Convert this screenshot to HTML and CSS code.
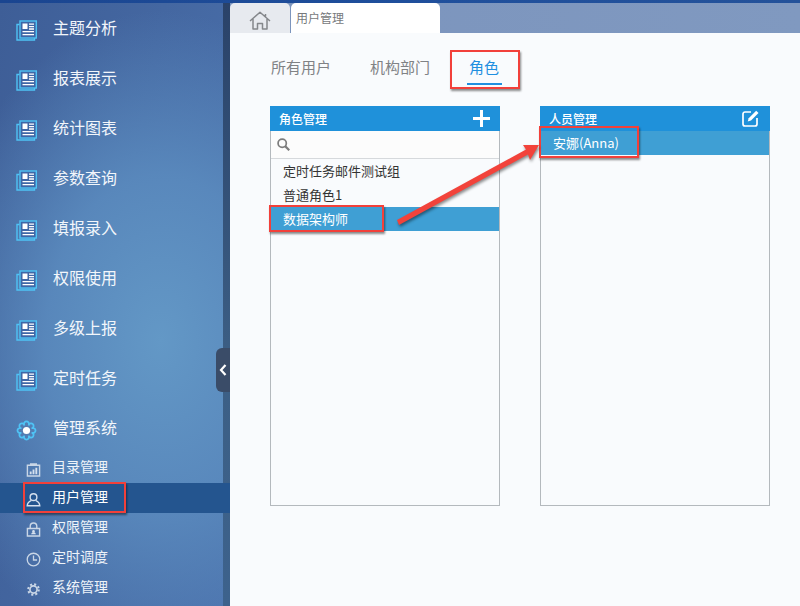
FILE: index.html
```html
<!DOCTYPE html>
<html lang="zh-CN">
<head>
<meta charset="utf-8">
<title>用户管理</title>
<link rel="stylesheet" href="styles.css">
</head>
<body>
<svg class="defs" width="0" height="0" aria-hidden="true">
  <symbol id="i-news" viewBox="0 0 21 21">
    <path d="M3.500 4.500H1V20H18.500V18" fill="none" stroke="#4fc3f5" stroke-width="1.400"/>
    <rect x="4" y="1" width="16.300" height="17" fill="#3f67a6" stroke="#4fc3f5" stroke-width="1.400"/>
    <path d="M6.500 3.500H11.500V9H6.500Z" fill="#fff"/>
    <path d="M13 4.200H18M13 6.600H18M13 9H18M6.500 11.600H18M6.500 14.600H18" stroke="#fff" stroke-width="1.300"/>
  </symbol>
</svg>
<div class="page">
  <div class="topbar"></div>
  <div class="shell">
    <aside class="sidebar">
      <nav class="menu">
        <a class="menu-item"><svg class="menu-icon"><use href="#i-news"/></svg><span>主题分析</span></a>
        <a class="menu-item"><svg class="menu-icon"><use href="#i-news"/></svg><span>报表展示</span></a>
        <a class="menu-item"><svg class="menu-icon"><use href="#i-news"/></svg><span>统计图表</span></a>
        <a class="menu-item"><svg class="menu-icon"><use href="#i-news"/></svg><span>参数查询</span></a>
        <a class="menu-item"><svg class="menu-icon"><use href="#i-news"/></svg><span>填报录入</span></a>
        <a class="menu-item"><svg class="menu-icon"><use href="#i-news"/></svg><span>权限使用</span></a>
        <a class="menu-item"><svg class="menu-icon"><use href="#i-news"/></svg><span>多级上报</span></a>
        <a class="menu-item"><svg class="menu-icon"><use href="#i-news"/></svg><span>定时任务</span></a>
        <a class="menu-item">
          <svg class="menu-icon" viewBox="0 0 21 21">
            <path d="M16.230 8.130A2.500 2.500 0 1 1 16.230 12.870A2.500 2.500 0 1 1 12.870 16.230A2.500 2.500 0 1 1 8.130 16.230A2.500 2.500 0 1 1 4.770 12.870A2.500 2.500 0 1 1 4.770 8.130A2.500 2.500 0 1 1 8.130 4.770A2.500 2.500 0 1 1 12.870 4.770A2.500 2.500 0 1 1 16.230 8.130Z" fill="none" stroke="#4fc3f5" stroke-width="1.800" stroke-linejoin="round"/>
            <circle cx="10.500" cy="10.500" r="3.600" fill="#fff"/>
          </svg>
          <span>管理系统</span>
        </a>
      </nav>
      <ul class="submenu">
        <li class="sub-item">
          <svg class="sub-icon" viewBox="0 0 16 16"><path d="M1.500 3.500h13v11.500h-13zM5 3.500V2h6v1.500" fill="none" stroke="#c9d6e6" stroke-width="1.500"/><path d="M4 13V10h2v3zM7 13V8h2v5zM10 13V6h2v7z" fill="#d5e0ee"/></svg>
          <span>目录管理</span>
        </li>
        <li class="sub-item sub-item-active">
          <svg class="sub-icon" viewBox="0 0 16 16"><circle cx="8" cy="5.500" r="3.600" fill="none" stroke="#d5e0ee" stroke-width="1.500"/><path d="M5.500 9.300C3 10.300 1.500 12 1.300 14.600h13.400C14.500 12 13 10.300 10.500 9.300" fill="none" stroke="#d5e0ee" stroke-width="1.500"/></svg>
          <span>用户管理</span>
        </li>
        <li class="sub-item">
          <svg class="sub-icon" viewBox="0 0 16 16"><path d="M1.500 7h13v8h-13zM4.500 7V4.500a3.500 3.500 0 0 1 7 0V7" fill="none" stroke="#c9d6e6" stroke-width="1.500"/><circle cx="8" cy="10" r="1.400" fill="#d5e0ee"/><path d="M5.500 13c.3-1.500 1.300-2 2.500-2s2.200.5 2.500 2z" fill="#d5e0ee"/></svg>
          <span>权限管理</span>
        </li>
        <li class="sub-item">
          <svg class="sub-icon" viewBox="0 0 16 16"><circle cx="8" cy="8" r="6.700" fill="none" stroke="#c9d6e6" stroke-width="1.400"/><path d="M8 3.800V8.500H11.800" fill="none" stroke="#c9d6e6" stroke-width="1.400"/></svg>
          <span>定时调度</span>
        </li>
        <li class="sub-item">
          <svg class="sub-icon" viewBox="0 0 16 16"><circle cx="8" cy="8" r="3.800" fill="none" stroke="#c9d6e6" stroke-width="1.800"/><circle cx="8" cy="8" r="5.600" fill="none" stroke="#c9d6e6" stroke-width="2.200" stroke-dasharray="2.200 2.198"/></svg>
          <span>系统管理</span>
        </li>
      </ul>
    </aside>
    <div class="strip"></div>
    <main class="main">
      <div class="tabbar">
        <div class="tab tab-home">
          <svg class="home-icon" viewBox="0 0 22 19"><path d="M1 10 11 1.200 21 10M4 8V18H8.500V12.500H13.500V18H18V8M16.500 3V5.500" fill="none" stroke="#85888c" stroke-width="1.500" stroke-linejoin="round"/></svg>
        </div>
        <div class="tab tab-current">用户管理</div>
      </div>
      <section class="content">
        <div class="subtabs">
          <span class="subtab">所有用户</span>
          <span class="subtab">机构部门</span>
          <span class="subtab subtab-active">角色</span>
        </div>
        <div class="panels">
          <div class="panel">
            <div class="panel-head">
              <span>角色管理</span>
              <svg class="panel-add" viewBox="0 0 17 17"><path d="M8.500 0V17M0 8.500H17" stroke="#fff" stroke-width="3"/></svg>
            </div>
            <div class="search">
              <svg class="search-icon" viewBox="0 0 12 12"><circle cx="4.800" cy="4.800" r="3.800" fill="none" stroke="#7d7d7d" stroke-width="1.600"/><path d="M7.500 7.500 11.300 11.300" stroke="#7d7d7d" stroke-width="2"/></svg>
            </div>
            <ul class="rows">
              <li class="row">定时任务邮件测试组</li>
              <li class="row">普通角色1</li>
              <li class="row row-active">数据架构师</li>
            </ul>
          </div>
          <div class="panel">
            <div class="panel-head">
              <span>人员管理</span>
              <svg class="panel-edit" viewBox="0 0 17 17"><path d="M9 2H3a2 2 0 0 0-2 2v10a2 2 0 0 0 2 2h10a2 2 0 0 0 2-2V8" fill="none" stroke="#fff" stroke-width="1.700"/><path d="M14.200.7 16.500 3 9 10.500l-3.300 1 1-3.300z" fill="#fff"/></svg>
            </div>
            <ul class="rows">
              <li class="row row-active">安娜(Anna)</li>
            </ul>
          </div>
        </div>
      </section>
    </main>
  </div>

  <button class="collapse" type="button" aria-label="收起">
    <svg viewBox="0 0 8 12" width="8" height="12"><path d="M6.500 1 2 6l4.500 5" fill="none" stroke="#fff" stroke-width="2.200"/></svg>
  </button>

  <div class="mark mark-user"></div>
  <div class="mark mark-role-tab"></div>
  <div class="mark mark-role-row"></div>
  <div class="mark mark-person"></div>
  <svg class="arrow" viewBox="0 0 800 606" aria-hidden="true">
    <polygon points="397,220 526,149.500 523,145 539,145 530,160 528,154.500 399,225" fill="#f2433b"/>
  </svg>
</div>
</body>
</html>
```
FILE: styles.css
```css
* {
  box-sizing: border-box;
}

html,
body {
  margin: 0;
  height: 100%;
}

body {
  font-family: "Noto Sans CJK SC", "Noto Sans", sans-serif;
  overflow: hidden;
}

.defs {
  position: absolute;
}

.page {
  position: relative;
  width: 800px;
  height: 606px;
  display: flex;
  flex-direction: column;
  overflow: hidden;
}

.topbar {
  height: 3px;
  flex: none;
  background: linear-gradient(90deg, #1a4590, #1f4f9c 50%, #24529a);
}

.shell {
  flex: 1;
  display: flex;
  min-height: 0;
}

.sidebar {
  width: 223px;
  flex: none;
  background:
    radial-gradient(ellipse 230px 330px at 72% 56%, #6398c6 0%, rgba(92, 141, 192, .85) 50%, rgba(70, 105, 165, 0) 100%),
    linear-gradient(100deg, #3e5e97, #4a70ab);
}

.strip {
  width: 7px;
  flex: none;
  background: linear-gradient(180deg, #2a4269, #3c5f85 60%, #3d628c);
}

.menu-item {
  height: 50px;
  display: flex;
  align-items: flex-start;
  padding: 13px 0 0 16px;
  color: #f2f6fb;
  font-size: 16px;
  line-height: 22px;
}

.menu-icon {
  width: 21px;
  height: 21px;
  flex: none;
  margin: 4px 16px 0 0;
}

.submenu {
  margin: 0;
  padding: 0;
  list-style: none;
}

.sub-item {
  height: 30px;
  display: flex;
  align-items: center;
  padding: 0 0 4px 26px;
  color: #eef3f9;
  font-size: 14px;
  line-height: 20px;
}

.sub-item-active {
  width: 230px;
  color: #fff;
  background: #24558f;
  position: relative;
}

.sub-icon {
  width: 15px;
  height: 15px;
  flex: none;
  margin: 7px 11px 0 0;
}

.main {
  flex: 1;
  min-width: 0;
  display: flex;
  flex-direction: column;
  background: #f9fbfd;
}

.tabbar {
  height: 30px;
  flex: none;
  display: flex;
  gap: 1px;
  background: linear-gradient(90deg, #7b94bd, #8099c0);
}

.tab {
  border-radius: 5px 5px 0 0;
  display: flex;
  align-items: center;
}

.tab-home {
  width: 60px;
  justify-content: center;
  background: #e7eaef;
}

.home-icon {
  width: 22px;
  height: 19px;
  margin-top: 5px;
}

.tab-current {
  width: 149px;
  padding-left: 5px;
  background: #fff;
  color: #77797c;
  font-size: 12px;
  line-height: 16px;
}

.content {
  flex: 1;
  padding: 0 30px 0 40px;
}

.subtabs {
  height: 73px;
  padding: 23px 0 0 1px;
  display: flex;
  gap: 39px;
  align-items: flex-start;
  color: #808285;
  font-size: 15px;
  line-height: 22px;
}

.subtab-active {
  color: #1f8fe0;
  position: relative;
}

.subtab-active::after {
  content: "";
  position: absolute;
  left: -2px;
  right: -3px;
  top: 27px;
  height: 2px;
  background: #1f8fe0;
}

.panels {
  display: flex;
  gap: 40px;
}

.panel {
  width: 230px;
  height: 400px;
  border: 1px solid #b4b9bd;
  border-top: 0;
}

.panel-head {
  height: 25px;
  margin: 0 -1px;
  padding: 0 10px 0 9px;
  display: flex;
  align-items: center;
  justify-content: space-between;
  background: #1f91da;
  color: #fff;
  font-size: 12px;
  font-weight: 500;
  line-height: 25px;
}

.panel-add {
  width: 17px;
  height: 17px;
}

.panel-edit {
  width: 17px;
  height: 17px;
  margin-right: 1px;
}

.search {
  height: 28px;
  display: flex;
  align-items: center;
  padding-left: 6px;
  background: #fcfcfc;
  border-bottom: 1px solid #d6d9dc;
}

.search-icon {
  width: 13px;
  height: 13px;
}

.rows {
  margin: 0;
  padding: 0;
  list-style: none;
}

.row {
  height: 24px;
  padding-left: 12px;
  color: #333;
  font-size: 13px;
  line-height: 24px;
}

.row-active {
  background: #3f9fd4;
  color: #fff;
}

/* Annotations drawn over the screenshot */
.collapse {
  position: absolute;
  left: 216px;
  top: 348px;
  width: 14px;
  height: 44px;
  padding: 0;
  border: 0;
  border-radius: 6px 0 0 6px;
  background: #3a4c68;
  display: flex;
  align-items: center;
  justify-content: center;
}

.mark {
  position: absolute;
  border: 2px solid #f2403a;
  box-shadow: 1px 2px 2px rgba(0, 0, 0, .45);
}

.mark-user {
  left: 23px;
  top: 482px;
  width: 103px;
  height: 31px;
}

.mark-role-tab {
  left: 450px;
  top: 50px;
  width: 70px;
  height: 39px;
}

.mark-role-row {
  left: 269px;
  top: 205px;
  width: 115px;
  height: 27px;
}

.mark-person {
  left: 539px;
  top: 126px;
  width: 100px;
  height: 32px;
}

.arrow {
  position: absolute;
  inset: 0;
  width: 800px;
  height: 606px;
  filter: drop-shadow(1px 2px 1.5px rgba(0, 0, 0, .45));
}
```
